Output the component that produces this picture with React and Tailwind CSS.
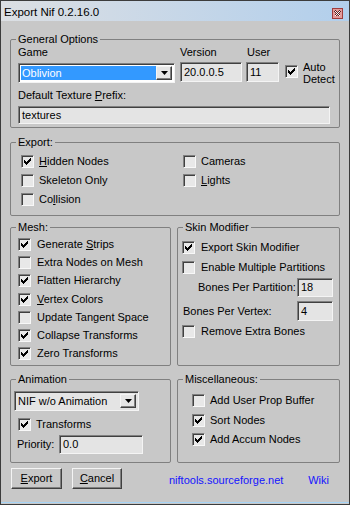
import React from "react";

function Group({ title, className = "", children }) {
  return (
    <fieldset className={`min-w-0 border border-[#808080] rounded-[2px] ${className}`}>
      <legend className="ml-[5px] px-[2px] leading-[13px]">{title}</legend>
      {children}
    </fieldset>
  );
}

function CheckMark() {
  // classic 7x7 windows tick, drawn pixel by pixel
  const cols = [2, 3, 4, 3, 2, 1, 0];
  return (
    <svg width="11" height="11" viewBox="0 0 11 11" shapeRendering="crispEdges">
      {cols.map((top, i) => (
        <rect key={i} x={2 + i} y={2 + top} width="1" height="3" fill="#000" />
      ))}
    </svg>
  );
}

function Check({ checked, children, gap = "gap-[5px]", className = "" }) {
  return (
    <div className={`flex items-center ${gap} ${className}`}>
      <span className="w-[13px] h-[13px] shrink-0 border border-t-[#808080] border-l-[#808080] border-b-[#f8f8f8] border-r-[#f8f8f8] bg-[#e8e8e8] shadow-[inset_1px_1px_0_#404040]">
        {checked && <CheckMark />}
      </span>
      <span className="whitespace-nowrap">{children}</span>
    </div>
  );
}

function Field({ className = "", children }) {
  return (
    <div
      className={`flex items-center pl-[3px] bg-[#e4e4e4] border border-t-[#808080] border-l-[#808080] border-b-[#f4f4f4] border-r-[#f4f4f4] shadow-[inset_1px_1px_0_#404040] whitespace-nowrap ${className}`}
    >
      {children}
    </div>
  );
}

function Arrow() {
  return (
    <span className="w-[16px] h-full shrink-0 flex items-center justify-center bg-[#e6e6e6] border border-t-[#f4f4f4] border-l-[#f4f4f4] border-b-[#404040] border-r-[#404040] shadow-[inset_-1px_-1px_0_#808080]">
      <svg width="7" height="4" viewBox="0 0 7 4">
        <polygon points="0,0 7,0 3.5,4" fill="#000" />
      </svg>
    </span>
  );
}

function Combo({ value, selected, className = "" }) {
  return (
    <div
      className={`flex p-[2px] border border-t-[#808080] border-l-[#808080] border-b-[#f4f4f4] border-r-[#f4f4f4] shadow-[inset_1px_1px_0_#404040] ${
        selected ? "bg-white" : "bg-[#e4e4e4]"
      } ${className}`}
    >
      <span
        className={`flex-1 flex items-center pl-[1px] whitespace-nowrap ${
          selected ? "bg-[#3399ff] text-white" : ""
        }`}
      >
        {value}
      </span>
      <Arrow />
    </div>
  );
}

function Btn({ children, className = "" }) {
  return (
    <button className={`h-[21px] flex items-center justify-center bg-[#c8c8c8] border border-t-[#f4f4f4] border-l-[#f4f4f4] border-b-[#404040] border-r-[#404040] shadow-[inset_-1px_-1px_0_#808080] ${className}`}>
      {children}
    </button>
  );
}

function CloseIcon() {
  return (
    <svg width="11" height="11" viewBox="0 0 11 11" shapeRendering="crispEdges">
      <rect x="0.5" y="0.5" width="10" height="10" fill="#e39a9a" stroke="#a03c3c" />
      <path d="M3 3 L8 8 M8 3 L3 8" stroke="#5a2020" strokeWidth="2.2" />
      <path d="M3 3 L8 8 M8 3 L3 8" stroke="#fff" strokeWidth="1.2" />
    </svg>
  );
}

export default function App() {
  return (
    <div className="w-[350px] h-[505px] flex flex-col overflow-hidden bg-[#c8c8c8] border border-[#3c3c3c] text-[11px] leading-[13px] text-black font-['Liberation_Sans',Arial,sans-serif]">
      <div className="h-[20px] shrink-0 flex items-center justify-between pl-[3px] pr-[6px] bg-gradient-to-r from-[#dcdfe3] to-[#b2cfec]">
        <span className="text-[11.5px] mt-[2px]">Export Nif 0.2.16.0</span>
        <span className="mt-[4px]">
          <CloseIcon />
        </span>
      </div>

      <div className="flex-1 flex flex-col px-[9px]">
        <Group title="General Options" className="mt-[12px] h-[95px]">
          <div className="pl-[7px] flex">
            <div className="w-[157px] flex flex-col">
              <span>Game</span>
              <Combo value="Oblivion" selected className="mt-[4px] h-[20px]" />
            </div>
            <div className="ml-[5px] w-[62px] flex flex-col">
              <span>Version</span>
              <Field className="mt-[3px] h-[20px]">20.0.0.5</Field>
            </div>
            <div className="ml-[4px] w-[33px] flex flex-col">
              <span className="pl-[1px]">User</span>
              <Field className="mt-[3px] h-[20px]">11</Field>
            </div>
            <div className="ml-[6px] flex items-start gap-[5px]">
              <span className="mt-[19px] w-[13px] h-[13px] shrink-0 border border-t-[#808080] border-l-[#808080] border-b-[#f8f8f8] border-r-[#f8f8f8] bg-[#e8e8e8] shadow-[inset_1px_1px_0_#404040]">
                <CheckMark />
              </span>
              <span className="mt-[15px] leading-[12px]">
                Auto
                <br />
                Detect
              </span>
            </div>
          </div>
          <div className="pl-[7px] mt-[4px]">
            Default Texture <span className="underline">P</span>refix:
          </div>
          <Field className="ml-[7px] mt-[4px] w-[312px] h-[18px]">textures</Field>
        </Group>

        <Group title="Export:" className="mt-[8px] h-[80px]">
          <div className="pl-[10px] pt-[3px] grid grid-cols-[162px_1fr] auto-rows-[19px]">
            <Check checked>
              <span className="underline">H</span>idden Nodes
            </Check>
            <Check>Cameras</Check>
            <Check>Skeleton Only</Check>
            <Check>
              <span className="underline">L</span>ights
            </Check>
            <Check>
              Co<span className="underline">l</span>lision
            </Check>
          </div>
        </Group>

        <div className="flex gap-[6px] mt-[5px]">
          <Group title="Mesh:" className="w-[161px] h-[145px]">
            <div className="pl-[7px] pt-[1px] flex flex-col">
              <Check checked gap="gap-[6px]" className="h-[18.3px]">
                Generate <span className="underline">S</span>trips
              </Check>
              <Check gap="gap-[6px]" className="h-[18.3px]">Extra Nodes on Mesh</Check>
              <Check checked gap="gap-[6px]" className="h-[18.3px]">Flatten Hierarchy</Check>
              <Check checked gap="gap-[6px]" className="h-[18.3px]">
                <span className="underline">V</span>ertex Colors
              </Check>
              <Check gap="gap-[6px]" className="h-[18.3px]">Update Tangent Space</Check>
              <Check checked gap="gap-[6px]" className="h-[18.3px]">Collapse Transforms</Check>
              <Check checked gap="gap-[6px]" className="h-[18.3px]">Zero Transforms</Check>
            </div>
          </Group>

          <Group title="Skin Modifier" className="w-[163px] h-[145px]">
            <div className="pl-[4px] pt-[3px] flex flex-col">
              <Check checked gap="gap-[6px]" className="h-[20px]">Export Skin Modifier</Check>
              <Check gap="gap-[6px]" className="h-[20px]">Enable Multiple Partitions</Check>
              <div className="h-[20px] flex items-center">
                <span className="w-[115px] pl-[16px] whitespace-nowrap">Bones Per Partition:</span>
                <Field className="w-[36px] h-[19px]">18</Field>
              </div>
              <div className="mt-[4px] h-[20px] flex items-center">
                <span className="w-[115px] pl-[1px] whitespace-nowrap">Bones Per Vertex:</span>
                <Field className="w-[36px] h-[20px]">4</Field>
              </div>
              <Check gap="gap-[6px]" className="h-[20px]">Remove Extra Bones</Check>
            </div>
          </Group>
        </div>

        <div className="flex gap-[6px] mt-[7px]">
          <Group title="Animation" className="w-[161px] h-[90px]">
            <div className="pl-[3px] flex flex-col">
              <Combo value="NIF w/o Animation" className="mt-[5px] w-[125px] h-[20px]" />
              <Check checked className="pl-[4px] mt-[4px] h-[18px]">Transforms</Check>
              <div className="mt-[2px] h-[19px] flex items-center">
                <span className="w-[45px] pl-[3px]">Priority:</span>
                <Field className="w-[84px] h-[19px]">0.0</Field>
              </div>
            </div>
          </Group>

          <Group title="Miscellaneous:" className="w-[163px] h-[90px]">
            <div className="pl-[14px] pt-[5px] flex flex-col">
              <Check className="h-[19.5px]">Add User Prop Buffer</Check>
              <Check checked className="h-[19.5px]">Sort Nodes</Check>
              <Check checked className="h-[19.5px]">Add Accum Nodes</Check>
            </div>
          </Group>
        </div>

        <div className="flex items-start mt-[5px] h-[21px]">
          <Btn className="ml-[1px] w-[51px]">
            <span>
              <span className="underline">E</span>xport
            </span>
          </Btn>
          <Btn className="ml-[10px] w-[50px]">
            <span>
              <span className="underline">C</span>ancel
            </span>
          </Btn>
          <a className="ml-[47px] mt-[6px] text-[#1414ff] whitespace-nowrap">niftools.sourceforge.net</a>
          <a className="ml-auto mr-[11px] mt-[6px] text-[#1414ff]">Wiki</a>
        </div>

        <div className="mt-auto mb-[1px] -mx-[9px] h-[1px] bg-[#a6d4f6]" />
      </div>
    </div>
  );
}
